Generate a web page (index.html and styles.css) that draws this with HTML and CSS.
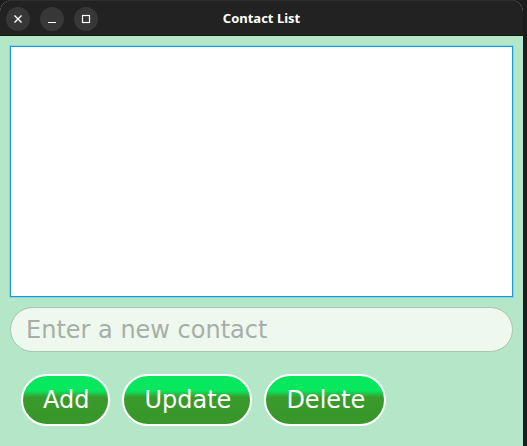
FILE: index.html
```html
<!DOCTYPE html>
<html>
<head>
<meta charset="utf-8">
<link rel="stylesheet" href="styles.css">
</head>
<body>
<div class="window">
  <div class="titlebar">
    <div class="controls">
      <span class="ctl"><svg width="10" height="10" viewBox="0 0 10 10"><path d="M1.5 1.5 L8.5 8.5 M8.5 1.5 L1.5 8.5" stroke="#fff" stroke-width="1.4"/></svg></span>
      <span class="ctl"><svg width="10" height="10" viewBox="0 0 10 10"><path d="M1 8.5 H9" stroke="#fff" stroke-width="1.2"/></svg></span>
      <span class="ctl"><svg width="10" height="10" viewBox="0 0 10 10"><rect x="1.5" y="1.5" width="7" height="7" fill="none" stroke="#fff" stroke-width="1.2"/></svg></span>
    </div>
    <div class="title">Contact List</div>
  </div>
  <div class="content">
    <div class="listbox"></div>
    <input class="field" type="text" placeholder="Enter a new contact">
    <div class="buttons">
      <button class="btn">Add</button>
      <button class="btn">Update</button>
      <button class="btn">Delete</button>
    </div>
  </div>
</div>
</body>
</html>
```
FILE: styles.css
```css
html, body {
  margin: 0;
  padding: 0;
  background: #1c1c1c;
  width: 527px;
  height: 446px;
  overflow: hidden;
}
.window {
  width: 523px;
  height: 446px;
  background: #b4e7c8;
  border-radius: 12px 12px 0 0;
  overflow: hidden;
  display: flex;
  flex-direction: column;
}
.titlebar {
  height: 36px;
  flex: none;
  background: #222222;
  border-top: 1px solid #2d2d2d;
  box-sizing: border-box;
  border-bottom: 1px solid #161616;
  position: relative;
  display: flex;
  align-items: center;
}
.controls {
  display: flex;
  gap: 10px;
  padding-left: 6px;
  margin-top: 1px;
}
.ctl {
  width: 24px;
  height: 24px;
  border-radius: 50%;
  background: #373737;
  display: flex;
  align-items: center;
  justify-content: center;
}
.title {
  position: absolute;
  left: 0;
  right: 0;
  top: 0;
  bottom: 0;
  display: flex;
  align-items: center;
  justify-content: center;
  color: #ffffff;
  font-family: "Noto Sans", sans-serif;
  font-weight: bold;
  font-size: 13px;
  pointer-events: none;
}
.content {
  padding: 10px 10px 0 10px;
  display: flex;
  flex-direction: column;
}
.listbox {
  height: 249px;
  background: #ffffff;
  border: 1px solid #1a9bd7;
  box-shadow: 0 0 0 1px #8bd3ec;
}
.field {
  margin-top: 10px;
  height: 45px;
  box-sizing: border-box;
  border: 1px solid #a7c6ad;
  border-radius: 23px;
  background: #eef8ef;
  font-family: "DejaVu Sans", sans-serif;
  font-size: 24px;
  padding: 0 15px;
  color: #333;
  outline: none;
}
.field::placeholder {
  color: #a6afa7;
}
.buttons {
  display: flex;
  gap: 12px;
  margin-top: 22px;
  padding-left: 11px;
}
.btn {
  height: 52px;
  box-sizing: border-box;
  border: 2px solid #ffffff;
  border-radius: 26px;
  padding: 0 19px 0 20px;
  font-family: "DejaVu Sans", sans-serif;
  font-size: 24px;
  color: #ffffff;
  background: linear-gradient(#07e85f 0%, #07e85f 30%, #3a9a2b 45%, #38962a 100%);
  cursor: pointer;
}
```
